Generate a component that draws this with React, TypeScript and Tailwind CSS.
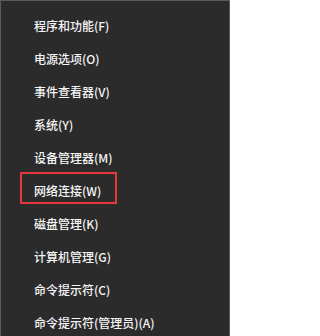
import React from "react";

const items = [
  "程序和功能(F)",
  "电源选项(O)",
  "事件查看器(V)",
  "系统(Y)",
  "设备管理器(M)",
  "网络连接(W)",
  "磁盘管理(K)",
  "计算机管理(G)",
  "命令提示符(C)",
  "命令提示符(管理员)(A)",
];

export default function App() {
  return (
    <div
      className="w-[230px] h-[336px] bg-[#2b2b2b] border-t border-l border-r border-[#5a5a5a] pt-[8px] overflow-hidden"
      style={{ fontFamily: '"Noto Sans CJK SC", "Noto Sans", sans-serif' }}
    >
      {items.map((t, i) => (
        <div key={t} className="relative h-[33px] flex items-center pl-[33px] text-[12px] font-medium text-[#f5f5f5]">
          <span className="leading-none">{t}</span>
          {i === 5 && (
            <div className="absolute left-[19px] top-[-2px] w-[97px] h-[32px] border-2 border-[#e8383d]" />
          )}
        </div>
      ))}
    </div>
  );
}
